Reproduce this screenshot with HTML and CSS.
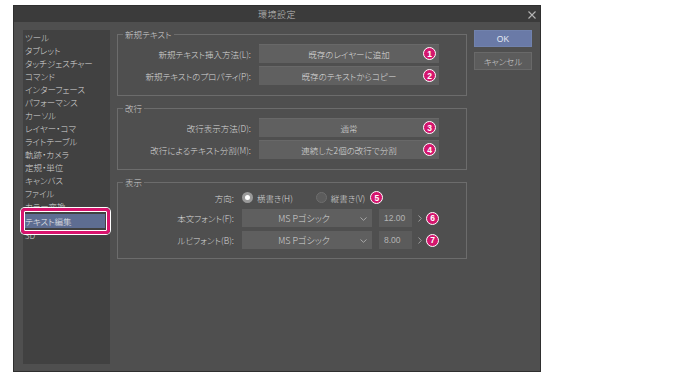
FILE: index.html
```html
<!DOCTYPE html>
<html lang="ja">
<head>
    <meta charset="UTF-8">
    <title>環境設定</title>
    <link rel="stylesheet" href="styles.css">
</head>
<body>
    <div class="dialog">
        <div class="titlebar">
            <span></span>
            <span class="title">環境設定</span>
            <span class="close">
                <svg width="8" height="8" viewBox="0 0 8 8"><path d="M0.5 0.5L7.5 7.5M7.5 0.5L0.5 7.5" stroke="#b5b5b5" stroke-width="1.1" fill="none"/></svg>
            </span>
        </div>

        <div class="dialog-body">
            <ul class="sidebar">
                <li>ツール</li>
                <li>タブレット</li>
                <li>タッチジェスチャー</li>
                <li>コマンド</li>
                <li>インターフェース</li>
                <li>パフォーマンス</li>
                <li>カーソル</li>
                <li>レイヤー・コマ</li>
                <li>ライトテーブル</li>
                <li>軌跡・カメラ</li>
                <li>定規・単位</li>
                <li>キャンバス</li>
                <li>ファイル</li>
                <li>カラー変換</li>
                <li class="selected">テキスト編集<span class="highlight"></span></li>
                <li>3D</li>
            </ul>

            <div class="main">
                <div class="group group-wide">
                    <span class="group-title">新規テキスト</span>
                    <div class="row">
                        <span class="label">新規テキスト挿入方法(L):</span>
                        <div class="btn">既存のレイヤーに追加<span class="badge">1</span></div>
                    </div>
                    <div class="row">
                        <span class="label">新規テキストのプロパティ(P):</span>
                        <div class="btn">既存のテキストからコピー<span class="badge">2</span></div>
                    </div>
                </div>

                <div class="group group-wide">
                    <span class="group-title">改行</span>
                    <div class="row">
                        <span class="label">改行表示方法(D):</span>
                        <div class="btn">通常<span class="badge">3</span></div>
                    </div>
                    <div class="row">
                        <span class="label">改行によるテキスト分割(M):</span>
                        <div class="btn">連続した2個の改行で分割<span class="badge">4</span></div>
                    </div>
                </div>

                <div class="group group-narrow">
                    <span class="group-title">表示</span>
                    <div class="row row-radio">
                        <span class="label">方向:</span>
                        <span class="radio checked"></span>
                        <span class="radio-text">横書き(H)</span>
                        <span class="radio"></span>
                        <span class="radio-text">縦書き(V)</span>
                        <span class="badge badge-inline">5</span>
                    </div>
                    <div class="row">
                        <span class="label">本文フォント(F):</span>
                        <div class="select">MS Pゴシック
                            <svg class="chevron" width="7" height="4" viewBox="0 0 7 4"><path d="M0.5 0.5L3.5 3.3L6.5 0.5" stroke="#a8a8a8" fill="none"/></svg>
                        </div>
                        <div class="number">12.00</div>
                        <svg class="arrow" width="4" height="7" viewBox="0 0 4 7"><path d="M0.5 0.5L3.3 3.5L0.5 6.5" stroke="#9c9c9c" fill="none"/></svg>
                        <span class="badge badge-inline">6</span>
                    </div>
                    <div class="row">
                        <span class="label">ルビフォント(B):</span>
                        <div class="select">MS Pゴシック
                            <svg class="chevron" width="7" height="4" viewBox="0 0 7 4"><path d="M0.5 0.5L3.5 3.3L6.5 0.5" stroke="#a8a8a8" fill="none"/></svg>
                        </div>
                        <div class="number">8.00</div>
                        <svg class="arrow" width="4" height="7" viewBox="0 0 4 7"><path d="M0.5 0.5L3.3 3.5L0.5 6.5" stroke="#9c9c9c" fill="none"/></svg>
                        <span class="badge badge-inline">7</span>
                    </div>
                </div>
            </div>

            <div class="actions">
                <div class="action-button ok">OK</div>
                <div class="action-button">キャンセル</div>
            </div>
        </div>
    </div>
</body>
</html>
```

FILE: styles.css
```css
* {
    margin: 0;
    padding: 0;
    box-sizing: border-box;
}

body {
    background-color: #ffffff;
    font-family: 'Noto Sans CJK JP', 'Noto Sans', sans-serif;
    font-size: 8.5px;
    font-weight: 300;
    font-feature-settings: "palt";
    color: #d8d8d8;
    padding: 5px 0 0 13px;
}

.dialog {
    width: 528px;
    height: 367px;
    background-color: #4f4f4f;
    border: 1px solid #2f2f2f;
    display: flex;
    flex-direction: column;
}

.titlebar {
    height: 16px;
    background-color: #3b3b3b;
    display: grid;
    grid-template-columns: 1fr auto 1fr;
    align-items: center;
}

.title {
    font-size: 9px;
    color: #bdbdbd;
    letter-spacing: 0.5px;
}

.close {
    justify-self: end;
    display: flex;
    margin-right: 4px;
    margin-top: 2px;
}

.dialog-body {
    flex: 1;
    display: flex;
    gap: 7px;
    padding: 8px 8px 7px 9px;
}

/* left category list */
.sidebar {
    list-style: none;
    width: 87px;
    background-color: #414141;
    padding-top: 1px;
}

.sidebar li {
    height: 13px;
    line-height: 13px;
    padding-left: 2px;
    color: #d6d6d6;
    white-space: nowrap;
}

.sidebar li.selected {
    position: relative;
    height: 14px;
    line-height: 14px;
    margin: 1px 5px 1px 2px;
    padding-left: 0;
    background-color: #5e6d92;
    color: #eeeeee;
}

.highlight {
    position: absolute;
    top: -6px;
    bottom: -6px;
    left: -4px;
    right: -5px;
    border: 3px solid #d8136d;
    border-radius: 4px;
    box-shadow: 0 0 0 1px #ffffff, inset 0 0 0 1px #ffffff;
}

/* settings groups */
.main {
    width: 350px;
    margin-top: 4px;
    display: flex;
    flex-direction: column;
    gap: 12px;
}

.group {
    position: relative;
    border: 1px solid #6c6c6c;
    padding: 9px 0 10px;
    display: flex;
    flex-direction: column;
    gap: 3px;
}

.group-title {
    position: absolute;
    top: -7px;
    left: 5px;
    padding: 0 2px;
    line-height: 12px;
    background-color: #4f4f4f;
    color: #cfcfcf;
}

.row {
    display: flex;
    align-items: center;
    height: 19px;
}

.label {
    text-align: right;
    margin-right: 8px;
    white-space: nowrap;
    color: #d8d8d8;
}

.group-wide .label {
    width: 133px;
}

.group-narrow {
    padding-top: 7px;
    gap: 4px;
    padding-bottom: 9px;
}

.group-narrow .label {
    width: 116px;
}

.group-narrow .row {
    height: 18px;
}

.group-narrow .row-radio {
    height: 15px;
}

.btn {
    position: relative;
    width: 180px;
    height: 100%;
    background-color: #606060;
    border-top: 1px solid #686868;
    display: flex;
    align-items: center;
    justify-content: center;
    color: #dcdcdc;
}

.badge {
    width: 13px;
    height: 13px;
    border-radius: 50%;
    background-color: #d4166e;
    border: 1px solid #ffffff;
    color: #ffffff;
    font-family: 'Liberation Sans', sans-serif;
    font-weight: 700;
    font-size: 8.5px;
    display: flex;
    align-items: center;
    justify-content: center;
}

.btn .badge {
    position: absolute;
    right: 3px;
    top: 2px;
}

.badge-inline {
    flex-shrink: 0;
}

.radio {
    width: 11px;
    height: 11px;
    border-radius: 50%;
    background-color: #5c5c5c;
    border: 1px solid #6e6e6e;
    margin-right: 4px;
}

.radio.checked {
    background-color: #ffffff;
    border: 3px solid #9a9a9a;
}

.radio-text {
    margin-right: 23px;
}

.radio-text + .badge {
    margin-left: -18px;
}

.select {
    position: relative;
    width: 130px;
    height: 100%;
    background-color: #5f5f5f;
    display: flex;
    align-items: center;
    justify-content: center;
    padding-right: 6px;
    color: #d6d6d6;
    font-size: 9px;
}

.chevron {
    position: absolute;
    right: 5px;
    top: 8px;
}

.number {
    width: 33px;
    height: 100%;
    margin-left: 7px;
    background-color: #5b5b5b;
    color: #b4b4b4;
    display: flex;
    align-items: center;
    padding-left: 5px;
    font-family: 'Liberation Sans', sans-serif;
}

.arrow {
    margin-left: 6px;
    margin-right: 4px;
    flex-shrink: 0;
}

/* OK / cancel */
.actions {
    width: 58px;
    display: flex;
    flex-direction: column;
    gap: 5px;
}

.action-button {
    height: 18px;
    display: flex;
    align-items: center;
    justify-content: center;
    background-color: #5c5c5c;
    border: 1px solid #696969;
    color: #d4d4d4;
}

.action-button.ok {
    height: 17px;
    background-color: #6a7aa7;
    border-color: #7182ad;
    color: #e4e8f2;
    font-family: 'Liberation Sans', sans-serif;
}
```
